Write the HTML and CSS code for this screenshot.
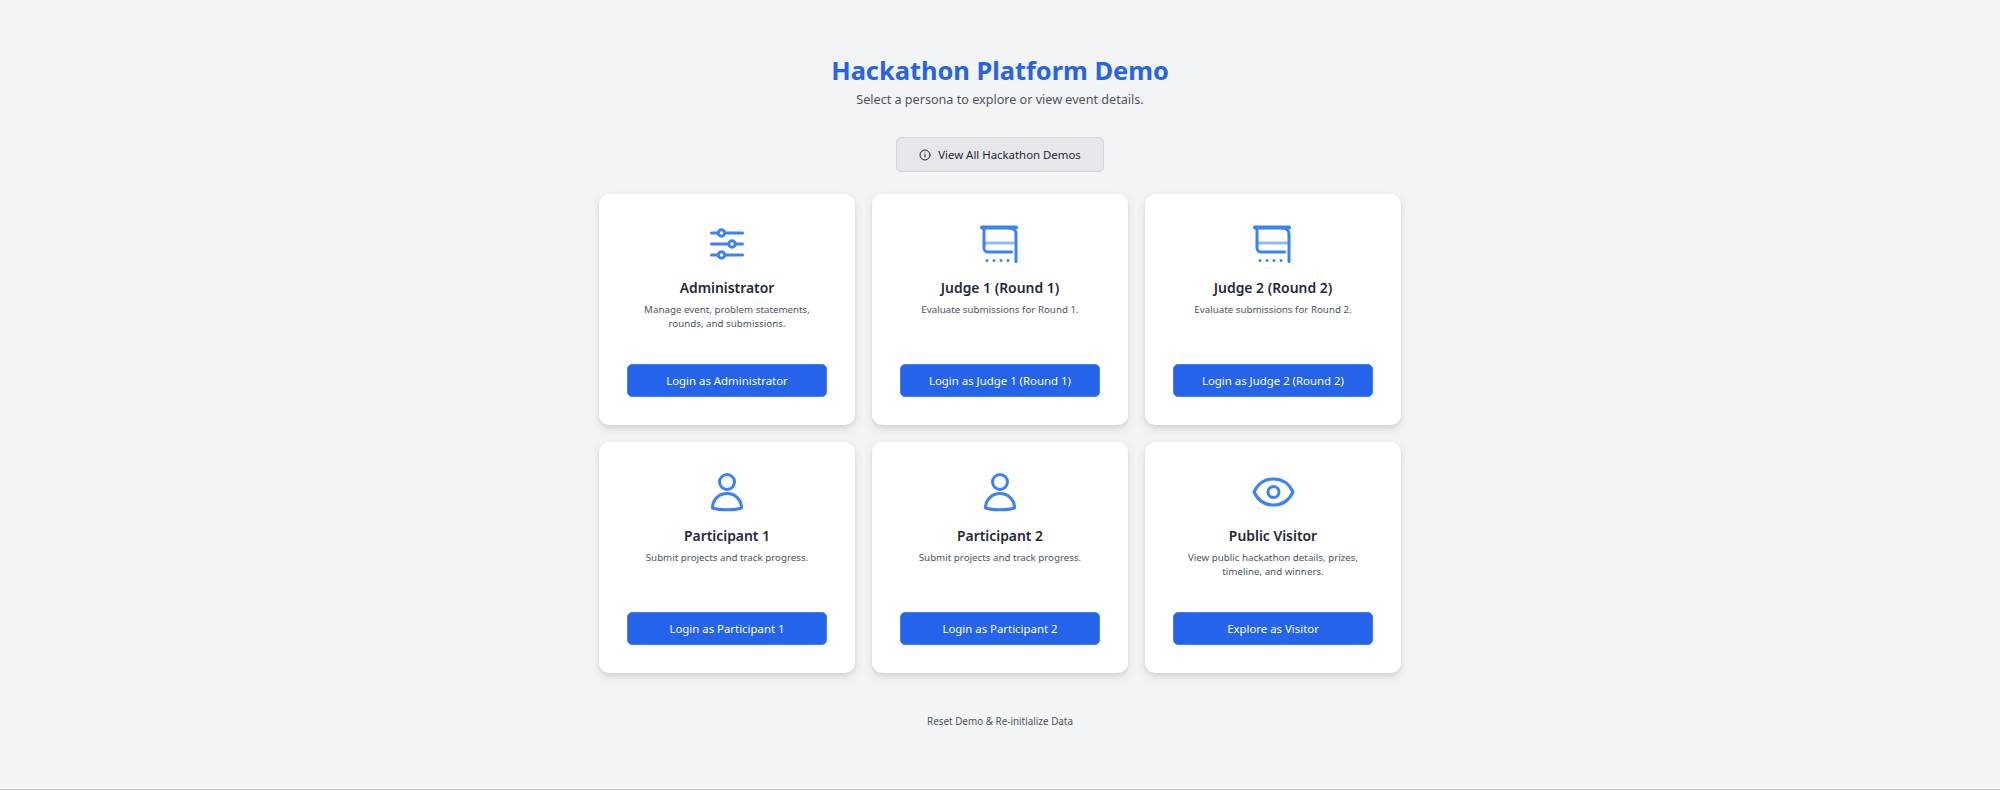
FILE: index.html
```html
<!DOCTYPE html>
<html lang="en">
  <head>
    <meta charset="UTF-8" />
    <title>Hackathon Platform Demo</title>
    <link rel="stylesheet" href="styles.css">
  </head>
  <body>
    <div class="page">
      <header class="page-header">
        <h1>Hackathon Platform Demo</h1>
        <p>Select a persona to explore or view event details.</p>
      </header>

      <button class="btn btn-secondary">
        <svg class="info-icon" viewBox="0 0 24 24" fill="none" stroke="currentColor" stroke-width="2" stroke-linecap="round">
          <circle cx="12" cy="12" r="10" />
          <path d="M12 16v-4.5M12 8h.01" />
        </svg>
        View All Hackathon Demos
      </button>

      <div class="persona-grid">
        <div class="persona-card">
          <svg class="persona-icon" viewBox="0 0 48 48" fill="none" stroke="currentColor" stroke-width="3" stroke-linecap="round">
            <path d="M8.500 13h31M8.500 24h31M8.500 35h31" />
            <circle cx="18.500" cy="13" r="3.200" fill="#fff" />
            <circle cx="29" cy="24" r="3.200" fill="#fff" />
            <circle cx="18.500" cy="35" r="3.200" fill="#fff" />
          </svg>
          <h2>Administrator</h2>
          <p>Manage event, problem statements, rounds, and submissions.</p>
          <button class="btn btn-primary">Login as Administrator</button>
        </div>

        <div class="persona-card">
          <svg class="persona-icon" viewBox="0 0 48 48" fill="none" stroke="currentColor" stroke-width="3" stroke-linecap="round" stroke-linejoin="round">
            <path d="M6 7.500h34" stroke-width="4" />
            <path d="M8 8v20a4 4 0 0 0 4 4h23.500" />
            <path d="M8 23h31" stroke-opacity="0.55" />
            <path d="M33 8c4 0 7 2.500 7 6v27.500" />
            <path d="M11 40.500h.01M18 40.500h.01M25 40.500h.01M32 40.500h.01" />
          </svg>
          <h2>Judge 1 (Round 1)</h2>
          <p>Evaluate submissions for Round 1.</p>
          <button class="btn btn-primary">Login as Judge 1 (Round 1)</button>
        </div>

        <div class="persona-card">
          <svg class="persona-icon" viewBox="0 0 48 48" fill="none" stroke="currentColor" stroke-width="3" stroke-linecap="round" stroke-linejoin="round">
            <path d="M6 7.500h34" stroke-width="4" />
            <path d="M8 8v20a4 4 0 0 0 4 4h23.500" />
            <path d="M8 23h31" stroke-opacity="0.55" />
            <path d="M33 8c4 0 7 2.500 7 6v27.500" />
            <path d="M11 40.500h.01M18 40.500h.01M25 40.500h.01M32 40.500h.01" />
          </svg>
          <h2>Judge 2 (Round 2)</h2>
          <p>Evaluate submissions for Round 2.</p>
          <button class="btn btn-primary">Login as Judge 2 (Round 2)</button>
        </div>

        <div class="persona-card">
          <svg class="persona-icon" viewBox="0 0 48 48" fill="none" stroke="currentColor" stroke-width="3" stroke-linejoin="round">
            <circle cx="24" cy="14" r="7.500" />
            <path d="M9.500 40c0-8.500 6.500-14.500 14.500-14.500S38.500 31.500 38.500 40c-4 1.300-9 1.800-14.500 1.800S13.500 41.300 9.500 40z" />
          </svg>
          <h2>Participant 1</h2>
          <p>Submit projects and track progress.</p>
          <button class="btn btn-primary">Login as Participant 1</button>
        </div>

        <div class="persona-card">
          <svg class="persona-icon" viewBox="0 0 48 48" fill="none" stroke="currentColor" stroke-width="3" stroke-linejoin="round">
            <circle cx="24" cy="14" r="7.500" />
            <path d="M9.500 40c0-8.500 6.500-14.500 14.500-14.500S38.500 31.500 38.500 40c-4 1.300-9 1.800-14.500 1.800S13.500 41.300 9.500 40z" />
          </svg>
          <h2>Participant 2</h2>
          <p>Submit projects and track progress.</p>
          <button class="btn btn-primary">Login as Participant 2</button>
        </div>

        <div class="persona-card">
          <svg class="persona-icon" viewBox="0 0 48 48" fill="none" stroke="currentColor" stroke-width="3" stroke-linejoin="round">
            <path d="M5 24C9 15.500 16 11 24.500 11S40 15.500 44 24c-4 8.500-11 13-19.500 13S9 32.500 5 24z" />
            <circle cx="24.500" cy="24" r="5.500" />
          </svg>
          <h2>Public Visitor</h2>
          <p>View public hackathon details, prizes, timeline, and winners.</p>
          <button class="btn btn-primary">Explore as Visitor</button>
        </div>
      </div>

      <a class="reset-link">Reset Demo &amp; Re-initialize Data</a>
    </div>
  </body>
</html>
```

FILE: styles.css
```css
* {
  font-family: "Noto Sans", sans-serif;
  box-sizing: border-box;
  margin: 0;
}
html,
body {
  height: 100%;
  background-color: #fff;
}
.page {
  display: flex;
  flex-direction: column;
  align-items: center;
  height: 790px;
  padding-top: 52px;
  background-color: #f3f4f6;
  border-bottom: 1px solid #c9cacc;
}
.page-header {
  text-align: center;
  margin-bottom: 25px;
}
.page-header h1 {
  font-size: 25.4px;
  line-height: 36px;
  font-weight: 700;
  color: #2563eb;
}
.page-header p {
  font-size: 12.6px;
  line-height: 24px;
  color: #4b5563;
}

.btn {
  display: flex;
  align-items: center;
  justify-content: center;
  border-radius: 5px;
  cursor: pointer;
  font-size: 11.4px;
}
.btn-secondary {
  gap: 7px;
  width: 208px;
  height: 35px;
  margin-bottom: 22px;
  background-color: #e5e7eb;
  border: 1px solid #d1d5db;
  color: #1f2937;
}
.btn-primary {
  width: 200px;
  height: 33px;
  margin-top: auto;
  background-color: #2563eb;
  border: 1px solid #3b82f6;
  color: #fff;
}
.info-icon {
  width: 12px;
  height: 12px;
}

.persona-grid {
  display: grid;
  grid-template-columns: repeat(3, 256px);
  grid-auto-rows: 231px;
  gap: 17px;
}
.persona-card {
  display: flex;
  flex-direction: column;
  align-items: center;
  padding: 26px 28px 28px;
  background-color: #fff;
  border-radius: 10px;
  box-shadow: 0 4px 10px rgba(0, 0, 0, 0.1), 0 2px 4px rgba(0, 0, 0, 0.06);
  text-align: center;
}
.persona-icon {
  width: 48px;
  height: 48px;
  margin-bottom: 9px;
  color: #3b82f6;
}
.persona-card h2 {
  font-size: 13.9px;
  line-height: 22px;
  font-weight: 600;
  color: #1f2937;
  margin-bottom: 4px;
}
.persona-card p {
  font-size: 9.75px;
  line-height: 14px;
  color: #4b5563;
}

.reset-link {
  margin-top: 40px;
  font-size: 9.9px;
  line-height: 16px;
  color: #4b5563;
}
```
